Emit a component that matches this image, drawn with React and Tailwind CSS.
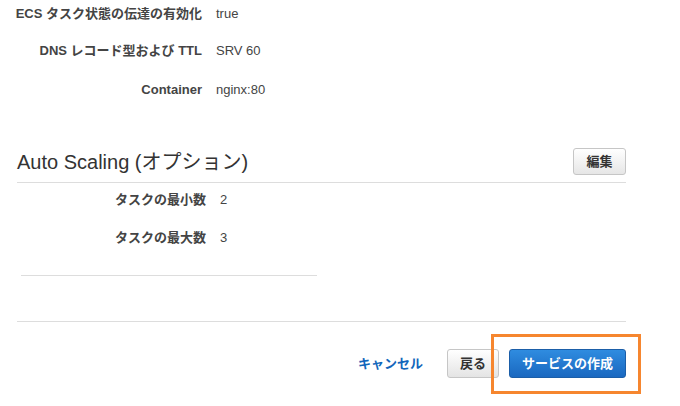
import React from 'react';

const font = { fontFamily: '"Liberation Sans", "Noto Sans CJK JP", sans-serif' };

const Row = ({ label, value, labelW, className = '' }) => (
  <div className={`flex items-center h-[20px] text-[13px] text-[#444] ${className}`}>
    <div className={`${labelW} text-right font-bold shrink-0`}>{label}</div>
    <div className="ml-[14px]">{value}</div>
  </div>
);

export default function App() {
  return (
    <div className="w-[680px] h-[406px] bg-white overflow-hidden" style={font}>
      {/* ===== SERVICE DISCOVERY SUMMARY ===== */}
      <div className="pt-[4px]">
        <Row label="ECS タスク状態の伝達の有効化" value="true" labelW="w-[202px]" />
        <Row label="DNS レコード型および TTL" value="SRV 60" labelW="w-[202px]" className="mt-[17px]" />
        <Row label="Container" value="nginx:80" labelW="w-[202px]" className="mt-[19px]" />
      </div>

      {/* ===== AUTO SCALING ===== */}
      <div className="ml-[17px] w-[609px] mt-[48px] flex items-center justify-between border-b border-[#dddddd] pb-[7px]">
        <h2 className="text-[20px] text-[#333] leading-none">Auto Scaling (オプション)</h2>
        <button className="w-[53px] h-[27px] rounded-[3px] border border-[#c6c6c6] bg-gradient-to-b from-white to-[#e6e6e6] text-[13px] font-bold text-[#333]">
          編集
        </button>
      </div>

      <div className="pt-[7px]">
        <Row label="タスクの最小数" value="2" labelW="w-[206px]" />
        <Row label="タスクの最大数" value="3" labelW="w-[206px]" className="mt-[18px]" />
      </div>
      <div className="ml-[21px] w-[296px] mt-[27px] border-t border-[#dddddd]" />

      {/* ===== FOOTER ACTIONS ===== */}
      <div className="ml-[17px] w-[609px] mt-[45px] border-t border-[#dddddd]" />
      <div className="flex items-center justify-end w-[626px] mt-[27px]">
        <a className="text-[13px] font-bold text-[#1166bb] mr-[24px]">キャンセル</a>
        <button className="w-[52px] h-[29px] rounded-[3px] border border-[#c6c6c6] bg-gradient-to-b from-white to-[#e4e4e4] text-[13px] font-bold text-[#333]">
          戻る
        </button>
        <div className="relative ml-[10px]">
          <button className="w-[117px] h-[29px] rounded-[3px] border border-[#1b5ea8] bg-gradient-to-b from-[#2f8ce0] to-[#1a68c0] text-[13px] font-bold text-white">
            サービスの作成
          </button>
          <div className="absolute -left-[18px] -right-[15px] -top-[15px] -bottom-[16px] border-[3px] border-[#f6862f] pointer-events-none" />
        </div>
      </div>
    </div>
  );
}
